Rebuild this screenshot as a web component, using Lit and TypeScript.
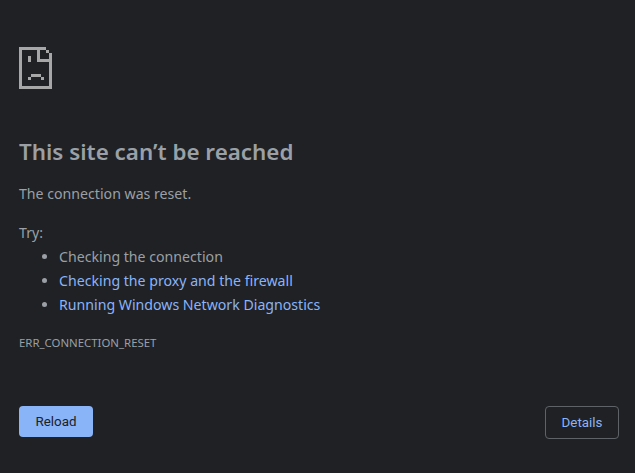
import { LitElement, html, css, svg } from "lit";
import { customElement } from "lit/decorators.js";

const rects: [number, number, number, number][] = [
  [0, 0, 27, 3],
  [0, 0, 3, 42],
  [0, 39, 33, 3],
  [30, 6, 3, 36],
  [27, 3, 3, 3],
  [18, 0, 3, 15],
  [18, 12, 15, 3],
  [9, 9, 3, 6],
  [12, 27, 10, 3],
  [9, 30, 3, 3],
  [22, 30, 3, 3],
];

@customElement("app-root")
export class AppRoot extends LitElement {
  static styles = css`
    :host {
      display: flex;
      flex-direction: column;
      width: 635px;
      height: 473px;
      box-sizing: border-box;
      padding: 47px 16px 34px 19px;
      background: #202124;
      color: #9aa0a6;
      font-family: "Noto Sans", "Open Sans", sans-serif;
      font-size: 14.15px;
      overflow: hidden;
    }
    .icon { display: block; width: 33px; height: 42px; fill: #a7a7a7; }
    h1 {
      margin: 45px 0 0;
      font-size: 22.4px;
      line-height: 36px;
      font-weight: 600;
      color: #9aa0a6;
    }
    .msg { margin: 12px 0 0; line-height: 24px; }
    .try { margin: 15px 0 0; line-height: 24px; }
    ul { margin: 0; padding: 0 0 0 40px; line-height: 24px; }
    li::marker { color: #9aa0a6; }
    a { color: #8ab4f8; text-decoration: none; }
    .code { margin: 18px 0 0; font-size: 11.4px; line-height: 16px; color: #9aa0a6; }
    .actions { margin-top: auto; display: flex; justify-content: space-between; align-items: flex-start; }
    button {
      box-sizing: border-box;
      width: 74px;
      border-radius: 4px;
      font-family: Roboto, "Liberation Sans", sans-serif;
      font-size: 13.4px;
      padding: 0;
    }
    .reload { height: 31px; border: 0; background: #8ab4f8; color: #202124; }
    .details { height: 33px; border: 1px solid #5f6368; background: transparent; color: #8ab4f8; }
  `;

  render() {
    return html`
      <svg class="icon" viewBox="0 0 33 42" shape-rendering="crispEdges" aria-hidden="true">
        ${rects.map(([x, y, w, h]) => svg`<rect x=${x} y=${y} width=${w} height=${h}></rect>`)}
      </svg>
      <h1>This site can’t be reached</h1>
      <p class="msg">The connection was reset.</p>
      <div class="try">Try:</div>
      <ul>
        <li>Checking the connection</li>
        <li><a href="#">Checking the proxy and the firewall</a></li>
        <li><a href="#">Running Windows Network Diagnostics</a></li>
      </ul>
      <div class="code">ERR_CONNECTION_RESET</div>
      <div class="actions">
        <button class="reload">Reload</button>
        <button class="details">Details</button>
      </div>
    `;
  }
}
